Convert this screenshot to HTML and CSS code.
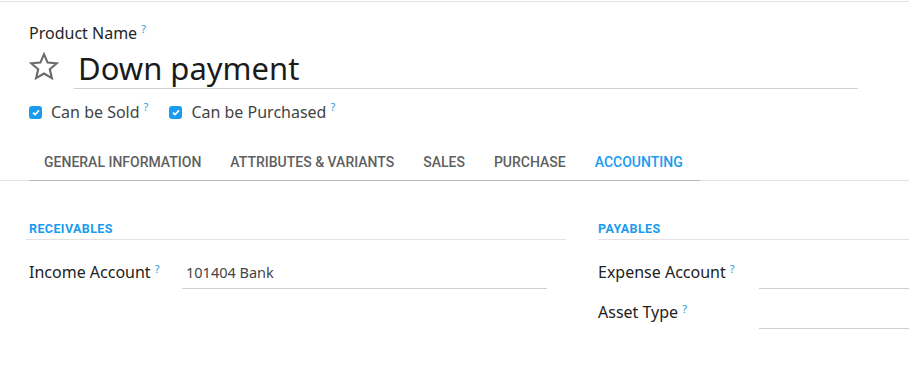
FILE: index.html
```html
<!DOCTYPE html>
<html>
<head>
<meta charset="utf-8">
<link rel="stylesheet" href="styles.css">
</head>
<body>
<div class="topline"></div>
<div class="sheet">
  <div class="name-label">Product Name<sup class="help">?</sup></div>
  <div class="title-row">
    <svg class="star" width="30" height="29" viewBox="0 0 30 29">
      <path d="M15 2.2 L18.6 10.6 L27.7 11.3 L20.8 17.3 L22.9 26.2 L15 21.5 L7.1 26.2 L9.2 17.3 L2.3 11.3 L11.4 10.6 Z" fill="none" stroke="#6a6a6a" stroke-width="2.1" stroke-linejoin="miter"/>
    </svg>
    <div class="title-input">Down payment</div>
  </div>
  <div class="checks">
    <label class="check"><span class="box"><svg width="8" height="7" viewBox="0 0 8 7"><path d="M1 3.6 L3.1 5.6 L7 1.4" fill="none" stroke="#fff" stroke-width="1.6"/></svg></span>Can be Sold<sup class="help">?</sup></label>
    <label class="check"><span class="box"><svg width="8" height="7" viewBox="0 0 8 7"><path d="M1 3.6 L3.1 5.6 L7 1.4" fill="none" stroke="#fff" stroke-width="1.6"/></svg></span>Can be Purchased<sup class="help">?</sup></label>
  </div>
</div>
<div class="tabbar">
  <div class="tabs">
    <div class="tab">GENERAL INFORMATION</div>
    <div class="tab">ATTRIBUTES &amp; VARIANTS</div>
    <div class="tab">SALES</div>
    <div class="tab">PURCHASE</div>
    <div class="tab active">ACCOUNTING</div>
  </div>
</div>
<div class="content">
  <div class="group left">
    <div class="group-title">RECEIVABLES</div>
    <div class="row">
      <div class="label">Income Account<sup class="help">?</sup></div>
      <div class="field">101404 Bank</div>
    </div>
  </div>
  <div class="group right">
    <div class="group-title">PAYABLES</div>
    <div class="row">
      <div class="label">Expense Account<sup class="help">?</sup></div>
      <div class="field"></div>
    </div>
    <div class="row">
      <div class="label">Asset Type<sup class="help">?</sup></div>
      <div class="field"></div>
    </div>
  </div>
</div>
</body>
</html>
```

FILE: styles.css
```css
html, body {
  margin: 0;
  padding: 0;
  background: #fff;
  overflow: hidden;
}
body {
  width: 909px;
  height: 380px;
  font-family: "Noto Sans", "Open Sans", sans-serif;
  color: #212529;
}
.topline {
  height: 1px;
  margin-top: 1px;
  background: #e2e2e2;
}
.sheet {
  padding-left: 29px;
}
.help {
  color: #1f9ae0;
  font-size: 11px;
  margin-left: 4px;
  vertical-align: top;
  position: relative;
  top: -4px;
}
.name-label {
  font-size: 16px;
  margin-top: 21px;
  height: 20px;
  line-height: 20px;
}
.title-row {
  display: flex;
  align-items: flex-start;
  margin-top: 8px;
}
.star {
  margin-top: 1px;
  width: 30px;
  height: 29px;
}
.title-input {
  margin-left: 15px;
  width: 784px;
  border-bottom: 1px solid #cfcfcf;
  font-size: 31px;
  line-height: 34px;
  height: 38px;
  padding-left: 4px;
  box-sizing: border-box;
  color: #1b1b1b;
}
.checks {
  display: flex;
  gap: 21px;
  margin-top: 13px;
}
.check {
  display: flex;
  align-items: center;
  font-size: 16px;
  color: #444;
  height: 20px;
}
.check .help { top: -6px; }
.box {
  width: 13px;
  height: 13px;
  border-radius: 3px;
  background: #1a9bf0;
  display: inline-flex;
  align-items: center;
  justify-content: center;
  margin-right: 9px;
}
.tabbar {
  margin-top: 21px;
  border-bottom: 1px solid #e2e2e2;
}
.tabs {
  margin-left: 29px;
  width: 671px;
  display: flex;
  border-bottom: 1px solid #b9b9b9;
  margin-bottom: -1px;
}
.tab {
  font-family: Roboto, sans-serif;
  font-weight: 500;
  font-size: 14px;
  color: #5f5f5f;
  padding: 0 14px 0 15px;
  height: 37px;
  line-height: 39px;
}
.tab.active { color: #1a9bf0; }
.content {
  display: flex;
  margin-top: 39px;
}
.group-title {
  font-family: Roboto, sans-serif;
  font-weight: 700;
  font-size: 12.5px;
  letter-spacing: 0.4px;
  color: #1a9bf0;
  height: 19px;
  border-bottom: 1px solid #e2e2e2;
  line-height: 18px;
}
.group.left {
  margin-left: 26px;
  width: 540px;
}
.group.left .group-title { padding-left: 3px; }
.group.right {
  margin-left: 32px;
  width: 311px;
}
.row {
  display: flex;
  align-items: flex-end;
  height: 40px;
}
.group.left .row { margin-top: 9px; padding-left: 3px; }
.group.right .row:nth-child(2) { margin-top: 9px; }
.label {
  font-size: 16px;
  color: #222;
  height: 30px;
  line-height: 27px;
  white-space: nowrap;
}
.group.left .label { width: 153px; }
.group.right .label { width: 161px; }
.field {
  height: 30px;
  line-height: 26px;
  border-bottom: 1px solid #cfcfcf;
  font-size: 14.5px;
  color: #444;
  padding-left: 4px;
  box-sizing: border-box;
}
.group.left .field { width: 365px; }
.group.right .field { width: 150px; }
```
